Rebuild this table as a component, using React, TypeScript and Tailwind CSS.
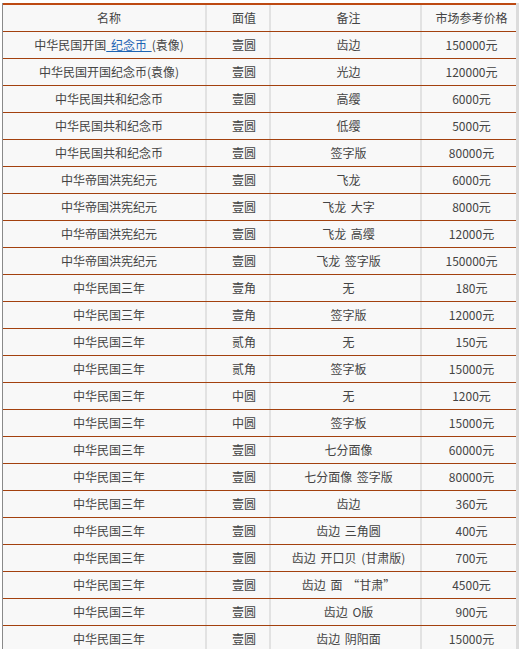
const ROWS: [string, string, string, string][] = [
  ["中华民国开国纪念币(袁像)", "壹圆", "光边", "120000元"],
  ["中华民国共和纪念币", "壹圆", "高缨", "6000元"],
  ["中华民国共和纪念币", "壹圆", "低缨", "5000元"],
  ["中华民国共和纪念币", "壹圆", "签字版", "80000元"],
  ["中华帝国洪宪纪元", "壹圆", "飞龙", "6000元"],
  ["中华帝国洪宪纪元", "壹圆", "飞龙 大字", "8000元"],
  ["中华帝国洪宪纪元", "壹圆", "飞龙 高缨", "12000元"],
  ["中华帝国洪宪纪元", "壹圆", "飞龙 签字版", "150000元"],
  ["中华民国三年", "壹角", "无", "180元"],
  ["中华民国三年", "壹角", "签字版", "12000元"],
  ["中华民国三年", "贰角", "无", "150元"],
  ["中华民国三年", "贰角", "签字板", "15000元"],
  ["中华民国三年", "中圆", "无", "1200元"],
  ["中华民国三年", "中圆", "签字板", "15000元"],
  ["中华民国三年", "壹圆", "七分面像", "60000元"],
  ["中华民国三年", "壹圆", "七分面像 签字版", "80000元"],
  ["中华民国三年", "壹圆", "齿边", "360元"],
  ["中华民国三年", "壹圆", "齿边 三角圆", "400元"],
  ["中华民国三年", "壹圆", "齿边 开口贝 (甘肃版)", "700元"],
  ["中华民国三年", "壹圆", "齿边 面 “甘肃”", "4500元"],
  ["中华民国三年", "壹圆", "齿边 O版", "900元"],
  ["中华民国三年", "壹圆", "齿边 阴阳面", "15000元"],
];

function Row({ cells }: { cells: React.ReactNode[] }) {
  return (
    <div className="flex h-[27px] border-b border-[#a3410f] [word-spacing:2px]">
      <div className="w-[204px] flex items-center justify-center border-r-2 border-[#e2e2e2] pl-[10px]">{cells[0]}</div>
      <div className="w-[64px] flex items-center justify-center border-r-2 border-[#e2e2e2] pl-[12px]">{cells[1]}</div>
      <div className="w-[151px] flex items-center justify-center border-r-2 border-[#e2e2e2] pl-[6px]">{cells[2]}</div>
      <div className="w-[94px] flex items-center justify-center pl-[5px]">{cells[3]}</div>
    </div>
  );
}

export default function App() {
  return (
    <div className="bg-white w-[523px] h-[649px] overflow-hidden pl-[2px] pt-[3px]">
      <div
        className="w-[517px] bg-[#f8f8f8] border-l border-[#8a8a8a] border-r-[3px] border-r-[#dcdcdc] text-[12px] text-[#444] leading-none"
        style={{ fontFamily: '"Noto Sans CJK SC", "Noto Sans", sans-serif' }}
      >
        <div className="border-t-2 border-[#bd4a12]">
          <Row cells={["名称", "面值", "备注", "市场参考价格"]} />
        </div>
        <Row
          cells={[
            <span>
              中华民国开国
              <span className="text-[#1e64b4] underline"> 纪念币 </span>
              (袁像)
            </span>,
            "壹圆",
            "齿边",
            "150000元",
          ]}
        />
        {ROWS.map((r, i) => (
          <Row key={i} cells={r} />
        ))}
      </div>
    </div>
  );
}
